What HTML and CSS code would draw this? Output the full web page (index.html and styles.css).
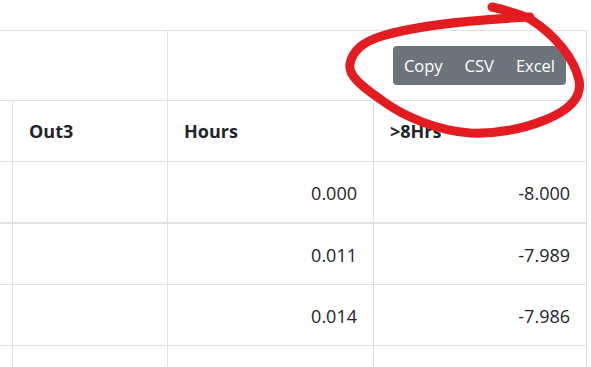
FILE: index.html
```html
<!DOCTYPE html>
<html>
<head>
<meta charset="utf-8">
<link rel="stylesheet" href="styles.css">
</head>
<body>
<div class="page">
  <table class="grid">
    <colgroup>
      <col class="c-prev">
      <col class="c-out">
      <col class="c-hours">
      <col class="c-over">
    </colgroup>
    <thead>
      <tr class="tools-row">
        <th colspan="2" class="tools-left"></th>
        <th colspan="2" class="tools-right">
          <div class="btn-group">
            <button class="btn">Copy</button>
            <button class="btn">CSV</button>
            <button class="btn">Excel</button>
          </div>
        </th>
      </tr>
      <tr class="head-row">
        <th></th>
        <th>Out3</th>
        <th>Hours</th>
        <th>&gt;8Hrs</th>
      </tr>
    </thead>
    <tbody>
      <tr class="first">
        <td></td><td></td><td class="num">0.000</td><td class="num">-8.000</td>
      </tr>
      <tr>
        <td></td><td></td><td class="num">0.011</td><td class="num">-7.989</td>
      </tr>
      <tr>
        <td></td><td></td><td class="num">0.014</td><td class="num">-7.986</td>
      </tr>
      <tr>
        <td></td><td></td><td class="num"></td><td class="num"></td>
      </tr>
    </tbody>
  </table>
  <svg class="scribble" width="591" height="367" viewBox="0 0 591 367">
    <path d="M 492 7 C 505 10, 518 13, 530 19 C 555 35, 574 58, 579 80 C 583 100, 565 112, 545 120 C 520 130, 495 134, 470 133 C 440 131, 405 118, 380 99 C 360 85, 348 75, 350 64 C 352 52, 362 42, 382 36 C 415 26, 470 20, 530 17" fill="none" stroke="#e31c22" stroke-width="9" stroke-linecap="round" stroke-linejoin="round"/>
  </svg>
</div>
</body>
</html>
```

FILE: styles.css
```css
html, body {
  margin: 0;
  padding: 0;
  background: #fff;
}

body {
  font-family: "Open Sans", "Noto Sans", "Liberation Sans", sans-serif;
  color: #212529;
  overflow: hidden;
}

.page {
  position: relative;
  width: 591px;
  height: 367px;
  padding-top: 30px;
  box-sizing: border-box;
  overflow: hidden;
}

.grid {
  table-layout: fixed;
  border-collapse: separate;
  border-spacing: 0;
  width: 587px;
  border-top: 1px solid #dee2e6;
}

.c-prev { width: 13px; }
.c-out { width: 155px; }
.c-hours { width: 206px; }
.c-over { width: 213px; }

.grid th,
.grid td {
  border-right: 1px solid #dee2e6;
  border-bottom: 1px solid #dee2e6;
  padding: 0 16px;
  font-size: 18px;
  line-height: 24px;
  box-sizing: border-box;
  white-space: nowrap;
  overflow: hidden;
}

.grid th:first-child,
.grid td:first-child {
  padding: 0;
}

.tools-row th {
  height: 70px;
  padding: 0;
}

.tools-right {
  text-align: right;
}

.btn-group {
  display: inline-flex;
  background: #6c757d;
  border-radius: 4px;
  margin-right: 20px;
  vertical-align: middle;
}

.btn {
  font-family: "Open Sans", "Noto Sans", "Liberation Sans", sans-serif;
  font-size: 16.5px;
  font-weight: 400;
  color: #fff;
  background: transparent;
  border: none;
  height: 39px;
  padding: 0 11px;
  line-height: 39px;
  cursor: pointer;
}

.head-row th {
  height: 61px;
  text-align: left;
  font-weight: 700;
  vertical-align: middle;
}

.grid tbody td {
  height: 61px;
  vertical-align: middle;
}

.grid tbody tr.first td {
  height: 62px;
  border-bottom-width: 2px;
  padding-top: 2px;
}

.grid td.num {
  text-align: right;
  padding-top: 2px;
}

.scribble {
  position: absolute;
  top: 0;
  left: 0;
  pointer-events: none;
}
```
